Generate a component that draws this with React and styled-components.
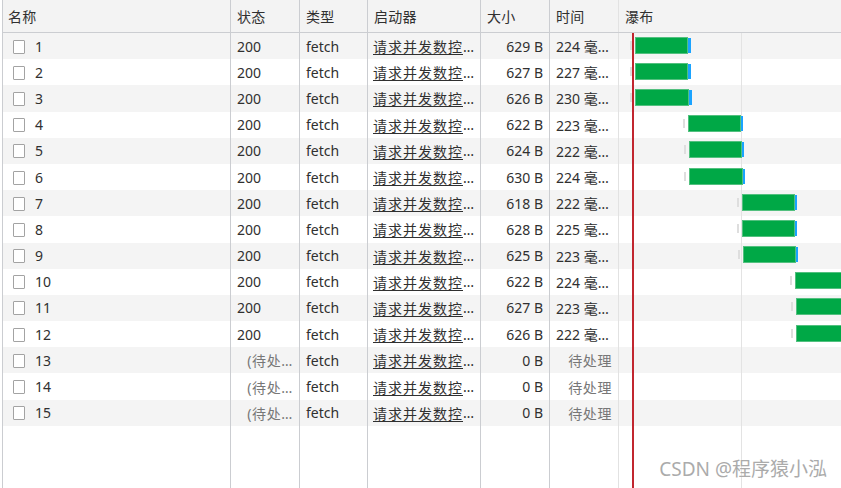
import React from 'react';
import styled, { createGlobalStyle } from 'styled-components';

const GlobalStyle = createGlobalStyle`
  html, body {
    margin: 0;
    padding: 0;
    background: #ffffff;
  }
`;

const borderColor = '#cbcdd1';
const stripeColor = '#f4f4f4';
const textColor = '#303030';
const fontStack = `"Noto Sans", "Noto Sans CJK SC", sans-serif`;
const columns = '228px 69px 68px 113px 69px 69px 222px';
const rowHeight = '26.2px';
const redLineX = 13;
const gridLineX = 122;
const waterfallStart = 619;

const Page = styled.div`
  position: relative;
  width: 841px;
  height: 488px;
  overflow: hidden;
  padding-left: 2px;
  box-sizing: border-box;
  font-family: ${fontStack};
  font-size: 14px;
  color: ${textColor};
`;

const Table = styled.div`
  display: flex;
  flex-direction: column;
  height: 100%;
  border-left: 1px solid ${borderColor};
`;

const Row = styled.div`
  display: grid;
  grid-template-columns: ${columns};
  height: ${rowHeight};
  background: ${p => (p.$striped ? stripeColor : '#ffffff')};
  flex: none;
`;

const HeaderRow = styled(Row)`
  height: 33px;
  background: #f3f3f3;
  border-bottom: 1px solid ${borderColor};
  box-sizing: border-box;
`;

const FillerRow = styled(Row)`
  flex: 1;
  height: auto;
`;

const Cell = styled.div`
  display: flex;
  align-items: center;
  justify-content: ${p => (p.$right ? 'flex-end' : 'flex-start')};
  padding: 0 6px;
  border-right: 1px solid ${borderColor};
  box-sizing: border-box;
  white-space: nowrap;
  overflow: hidden;
  min-width: 0;
  color: ${p => (p.$muted ? '#777777' : textColor)};
  letter-spacing: ${p => (p.$cjk ? '0.6px' : 'normal')};
`;

const HeaderCell = styled(Cell)`
  padding-left: ${p => (p.$first ? '5px' : '6px')};
  letter-spacing: 0.3px;
`;

const NameCell = styled(Cell)`
  padding-left: 10px;
  gap: 10px;
`;

const Checkbox = styled.span`
  display: inline-block;
  width: 12px;
  height: 14px;
  margin-top: 1px;
  border: 1px solid #a3a3a3;
  border-radius: 1px;
  background: #ffffff;
  box-sizing: border-box;
  flex: none;
`;

const Link = styled.span`
  text-decoration: underline;
  text-underline-offset: 2px;
  letter-spacing: 1px;
  margin-left: -1px;
`;

const WaterfallCell = styled.div`
  display: flex;
  align-items: center;
  padding-bottom: 2px;
  box-sizing: border-box;
  overflow: hidden;
  border-left: 1px solid #e2e2e2;
  margin-left: -1px;
  background-image:
    linear-gradient(to right, transparent ${redLineX}px, #c1262f ${redLineX}px, #c1262f ${redLineX + 2}px, transparent ${redLineX + 2}px),
    linear-gradient(to right, transparent ${gridLineX}px, #e3e3e3 ${gridLineX}px, #e3e3e3 ${gridLineX + 1}px, transparent ${gridLineX + 1}px);
`;

const WaterfallHeader = styled.div`
  display: flex;
  align-items: center;
  padding-left: 6px;
  border-left: 1px solid #e2e2e2;
  margin-left: -1px;
  letter-spacing: 0.3px;
`;

const Stub = styled.span`
  flex: none;
  width: 2px;
  height: 9px;
  background: #dedede;
  margin-right: 3px;
`;

const Bar = styled.span`
  flex: none;
  height: 17px;
  background: #00a846;
  border: 1px solid #52c07f;
  box-sizing: border-box;
`;

const Tip = styled.span`
  flex: none;
  width: 3px;
  height: 15px;
  background: #1aa3ff;
`;

const Watermark = styled.div`
  position: absolute;
  right: 14px;
  bottom: 6px;
  font-family: ${fontStack};
  font-size: 19px;
  color: #ababab;
  text-shadow: 0 0 1px #ffffff;
  pointer-events: none;
`;

const requests = [
  { id: 1, size: '629 B', time: '224 毫…', bar: [635, 688, 691] },
  { id: 2, size: '627 B', time: '227 毫…', bar: [635, 688, 691] },
  { id: 3, size: '626 B', time: '230 毫…', bar: [635, 689, 692] },
  { id: 4, size: '622 B', time: '223 毫…', bar: [688, 741, 743] },
  { id: 5, size: '624 B', time: '222 毫…', bar: [689, 742, 744] },
  { id: 6, size: '630 B', time: '224 毫…', bar: [689, 743, 745] },
  { id: 7, size: '618 B', time: '222 毫…', bar: [742, 795, 797] },
  { id: 8, size: '628 B', time: '225 毫…', bar: [742, 795, 797] },
  { id: 9, size: '625 B', time: '223 毫…', bar: [743, 796, 798] },
  { id: 10, size: '622 B', time: '224 毫…', bar: [795, 860, 862] },
  { id: 11, size: '627 B', time: '223 毫…', bar: [796, 860, 862] },
  { id: 12, size: '626 B', time: '222 毫…', bar: [796, 860, 862] },
  { id: 13, size: '0 B', pending: true },
  { id: 14, size: '0 B', pending: true },
  { id: 15, size: '0 B', pending: true },
];

const headers = ['名称', '状态', '类型', '启动器', '大小', '时间'];

const Waterfall = ({ bar }) => {
  if (!bar) return <WaterfallCell />;
  const [start, end, tipEnd] = bar;
  return (
    <WaterfallCell>
      <Stub style={{ marginLeft: start - waterfallStart - 5 }} />
      <Bar style={{ width: end - start }} />
      <Tip style={{ width: tipEnd - end }} />
    </WaterfallCell>
  );
};

const App = () => (
  <Page>
    <GlobalStyle />
    <Table>
      <HeaderRow>
        {headers.map((label, index) => (
          <HeaderCell key={label} $first={index === 0}>{label}</HeaderCell>
        ))}
        <WaterfallHeader>瀑布</WaterfallHeader>
      </HeaderRow>

      {requests.map((req, index) => (
        <Row key={`req-${req.id}`} $striped={index % 2 === 0}>
          <NameCell>
            <Checkbox />
            {req.id}
          </NameCell>
          {req.pending ? <Cell $right $muted $cjk>(待处…</Cell> : <Cell>200</Cell>}
          <Cell>fetch</Cell>
          <Cell>
            <Link>请求并发数控</Link>…
          </Cell>
          <Cell $right>{req.size}</Cell>
          {req.pending ? <Cell $right $muted $cjk>待处理</Cell> : <Cell>{req.time}</Cell>}
          <Waterfall bar={req.bar} />
        </Row>
      ))}

      <FillerRow>
        <Cell />
        <Cell />
        <Cell />
        <Cell />
        <Cell />
        <Cell />
        <WaterfallCell />
      </FillerRow>
    </Table>
    <Watermark>CSDN @程序猿小泓</Watermark>
  </Page>
);

export default App;
